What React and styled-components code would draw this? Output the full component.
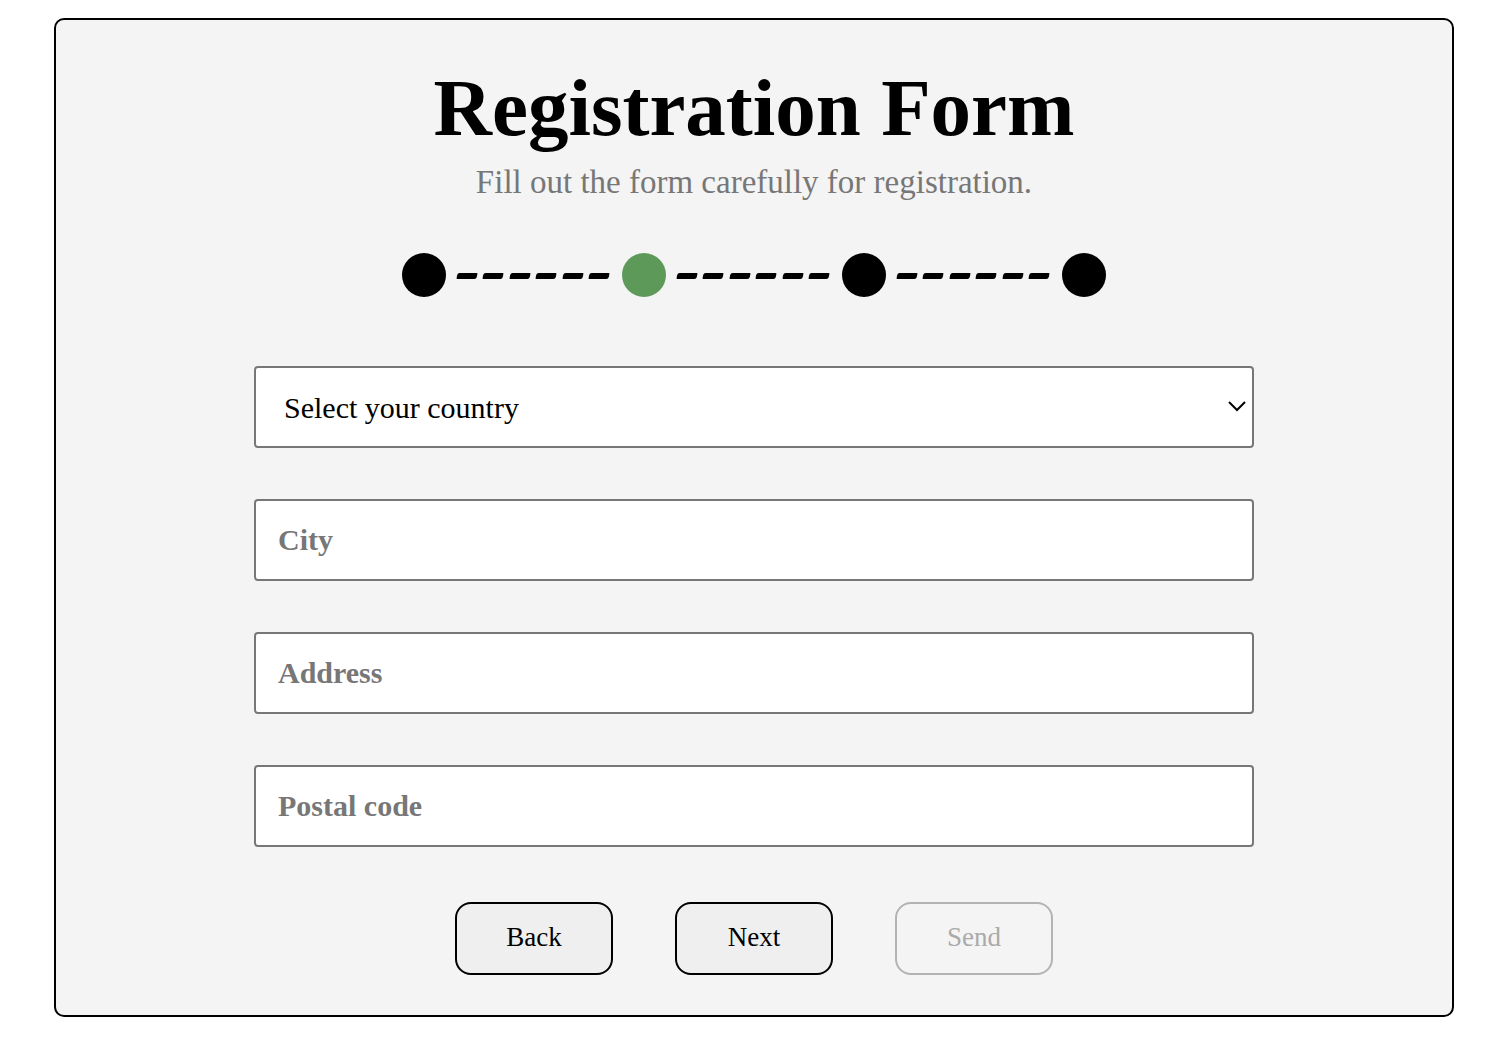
import React from "react";
import styled, { createGlobalStyle } from "styled-components";

const Global = createGlobalStyle`
  html, body { margin: 0; padding: 0; background: #fff; }
  body { font-family: "Liberation Serif", "Times New Roman", serif; }
  * { box-sizing: border-box; }
`;

const Card = styled.div`
  width: 1400px;
  height: 999px;
  margin: 18px 0 0 54px;
  border: 2px solid #000;
  border-radius: 10px;
  background: #f4f4f4;
  display: flex;
  flex-direction: column;
  align-items: center;
  padding-top: 48px;
`;

const Title = styled.h1`
  margin: 0;
  font-family: "Liberation Serif", serif;
  font-weight: 700;
  font-size: 81px;
  line-height: 80px;
  color: #000;
`;

const Subtitle = styled.p`
  margin: 18px 0 0;
  font-family: "Liberation Serif", serif;
  font-size: 33px;
  line-height: 33px;
  color: #777;
`;

const Stepper = styled.div`
  display: flex;
  align-items: center;
  margin-top: 54px;
`;

const Dot = styled.span`
  width: 44px;
  height: 44px;
  border-radius: 50%;
  background: ${(p) => (p.$active ? "#5d9a5a" : "#000")};
  flex: none;
`;

const Connector = styled.div`
  width: 176px;
  display: flex;
  align-items: center;
  justify-content: space-between;
  padding: 1px 13px 0 11px;
`;

const Dash = styled.span`
  width: 20px;
  height: 6px;
  background: #000;
  border-radius: 2px 1px 2px 1px;
  transform: skewX(-12deg);
`;

const Form = styled.form`
  width: 1000px;
  margin-top: 69px;
  display: flex;
  flex-direction: column;
  gap: 51px;
`;

const SelectWrap = styled.div`
  position: relative;
  height: 82px;
`;

const Select = styled.select`
  appearance: none;
  -webkit-appearance: none;
  width: 100%;
  height: 100%;
  border: 2px solid #777;
  border-radius: 4px;
  background: #fff;
  padding: 0 60px 0 28px;
  font-family: "Liberation Serif", serif;
  font-size: 30px;
  color: #000;
  outline: none;
`;

const Chevron = styled.svg`
  position: absolute;
  right: 7px;
  top: 34px;
  pointer-events: none;
`;

const Input = styled.input`
  height: 82px;
  width: 100%;
  border: 2px solid #777;
  border-radius: 4px;
  background: #fff;
  padding: 0 22px;
  font-family: "Liberation Serif", serif;
  font-size: 30px;
  font-weight: 700;
  color: #000;
  outline: none;
  &::placeholder {
    color: #777;
    opacity: 1;
  }
`;

const Buttons = styled.div`
  display: flex;
  gap: 62px;
  margin-top: 55px;
`;

const Button = styled.button`
  width: 158px;
  height: 73px;
  border-radius: 16px;
  border: 2px solid ${(p) => (p.disabled ? "#b3b3b3" : "#000")};
  background: ${(p) => (p.disabled ? "#f4f4f4" : "#efefef")};
  color: ${(p) => (p.disabled ? "#aaa" : "#000")};
  font-family: "Liberation Serif", serif;
  font-size: 27px;
  padding: 0 0 2px;
  cursor: ${(p) => (p.disabled ? "default" : "pointer")};
`;

const DashRow = () => (
  <Connector>
    {Array.from({ length: 6 }).map((_, i) => (
      <Dash key={i} />
    ))}
  </Connector>
);

export default function App() {
  return (
    <>
      <Global />
      <Card>
        <Title>Registration Form</Title>
        <Subtitle>Fill out the form carefully for registration.</Subtitle>
        <Stepper>
          <Dot />
          <DashRow />
          <Dot $active />
          <DashRow />
          <Dot />
          <DashRow />
          <Dot />
        </Stepper>
        <Form onSubmit={(e) => e.preventDefault()}>
          <SelectWrap>
            <Select defaultValue="">
              <option value="">Select your country</option>
            </Select>
            <Chevron width="20" height="12" viewBox="0 0 20 12">
              <path d="M2 2 L10 10 L18 2" fill="none" stroke="#000" strokeWidth="2" />
            </Chevron>
          </SelectWrap>
          <Input placeholder="City" />
          <Input placeholder="Address" />
          <Input placeholder="Postal code" />
        </Form>
        <Buttons>
          <Button type="button">Back</Button>
          <Button type="button">Next</Button>
          <Button type="button" disabled>Send</Button>
        </Buttons>
      </Card>
    </>
  );
}
